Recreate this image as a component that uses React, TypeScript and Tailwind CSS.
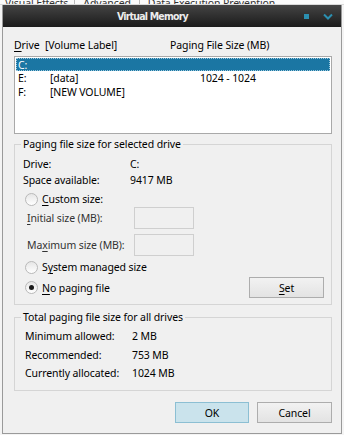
import React from "react";

const U = ({ children }: { children: React.ReactNode }) => (
  <span className="underline underline-offset-[2px]">{children}</span>
);

const Radio = ({ checked }: { checked?: boolean }) => (
  <span className="mr-[4px] flex h-[13px] w-[13px] items-center justify-center rounded-full border border-[#b9b9b9] bg-linear-to-b from-[#e6e6e6] to-[#ffffff]">
    {checked && <span className="h-[5px] w-[5px] rounded-full bg-[#1a1a1a]" />}
  </span>
);

const drives = [
  { letter: "C:", label: "", size: "" },
  { letter: "E:", label: "[data]", size: "1024 - 1024" },
  { letter: "F:", label: "[NEW VOLUME]", size: "" },
];

export default function App() {
  return (
    <div className="h-[435px] w-[344px] overflow-hidden bg-[#f4f4f4] font-['Noto_Sans',sans-serif] text-[10.5px] leading-[14px] tracking-[-0.1px] text-black">
      {/* tab strip, cut off above */}
      <div className="flex h-[5px] items-end overflow-hidden border-b border-[#d9d9d9] bg-[#fbfbfb] pl-[5px] text-[#333]">
        <span className="-mb-[6px] pr-[6px]">Visual Effects</span>
        <span className="-mb-[6px] border-l border-[#bbb] px-[8px]">Advanced</span>
        <span className="-mb-[6px] border-l border-[#bbb] px-[8px]">Data Execution Prevention</span>
      </div>

      <div className="ml-[2px] h-[429px] w-[340px] border-x border-b border-[#9a9a9a] bg-[#f0f0f0]">
        {/* title bar */}
        <div className="flex h-[22px] items-center bg-linear-to-b from-[#444444] to-[#1c1c1c] pr-[8px]">
          <span className="ml-[114px] font-['DejaVu_Sans_Condensed','DejaVu_Sans',sans-serif] text-[10.5px] font-bold tracking-[-0.8px] text-[#ececec]">
            Virtual Memory
          </span>
          <span className="ml-auto h-[5px] w-[5px] bg-[#2b8fb0]" />
          <svg width="10" height="7" viewBox="0 0 10 7" className="ml-[14px]">
            <path d="M1 1.5 L5 5.5 L9 1.5" fill="none" stroke="#2b8fb0" strokeWidth="2" />
          </svg>
        </div>

        <div className="pl-[11px] pr-[9px]">
          {/* list header */}
          <div className="mt-[11px] flex h-[14px] items-center">
            <span className="w-[31px]"><U>D</U>rive</span>
            <span className="w-[125px]">[Volume Label]</span>
            <span>Paging File Size (MB)</span>
          </div>

          {/* list */}
          <div className="mt-[4px] h-[78px] border border-[#a9a9a9] bg-white p-[1px]">
            {drives.map((d, i) => (
              <div
                key={d.letter}
                className={
                  i === 0
                    ? "flex h-[13px] items-center border border-dotted border-[#9cc9de] bg-[#1b76a3] pl-[1px] text-white"
                    : "flex h-[14px] items-center pl-[2px]"
                }
              >
                <span className="w-[32px]">{d.letter}</span>
                <span className="w-[150px]">{d.label}</span>
                <span>{d.size}</span>
              </div>
            ))}
          </div>

          {/* selected drive group */}
          <fieldset className="mt-[3px] h-[168px] border border-[#d5d5d5]">
            <legend className="ml-[6px] px-[2px] leading-[14px]">Paging file size for selected drive</legend>
            <div className="pl-[8px] pr-[7px]">
              <div className="mt-[5px] flex h-[16px] items-center">
                <span className="w-[107px]">Drive:</span>
                <span>C:</span>
              </div>
              <div className="flex h-[16px] items-center">
                <span className="w-[107px]">Space available:</span>
                <span>9417 MB</span>
              </div>
              <div className="mt-[4px] flex h-[14px] items-center pl-[2px]">
                <Radio />
                <span><U>C</U>ustom size:</span>
              </div>
              <div className="mt-[1px] flex h-[22px] items-center pl-[4px]">
                <span className="w-[107px] text-[#333]"><U>I</U>nitial size (MB):</span>
                <span className="h-[22px] w-[60px] border border-[#cfcfcf] bg-[#f0f0f0]" />
              </div>
              <div className="mt-[5px] flex h-[22px] items-center pl-[4px]">
                <span className="w-[107px] text-[#333]">Ma<U>x</U>imum size (MB):</span>
                <span className="h-[22px] w-[60px] border border-[#cfcfcf] bg-[#f0f0f0]" />
              </div>
              <div className="mt-[3px] flex h-[16px] items-center pl-[2px]">
                <Radio />
                <span>S<U>y</U>stem managed size</span>
              </div>
              <div className="mt-[2px] flex h-[21px] items-center pl-[2px]">
                <Radio checked />
                <span><U>N</U>o paging file</span>
                <button className="ml-auto h-[21px] w-[75px] border border-[#adadad] bg-linear-to-b from-[#f2f2f2] to-[#e3e3e3]">
                  <U>S</U>et
                </button>
              </div>
            </div>
          </fieldset>

          {/* all drives group */}
          <fieldset className="mt-[5px] h-[81px] border border-[#d5d5d5]">
            <legend className="ml-[6px] px-[2px] leading-[14px]">Total paging file size for all drives</legend>
            <div className="pl-[10px]">
              <div className="mt-[3px] flex h-[18px] items-center">
                <span className="w-[107px]">Minimum allowed:</span>
                <span>2 MB</span>
              </div>
              <div className="flex h-[19px] items-center">
                <span className="w-[107px]">Recommended:</span>
                <span>753 MB</span>
              </div>
              <div className="flex h-[18px] items-center">
                <span className="w-[107px]">Currently allocated:</span>
                <span>1024 MB</span>
              </div>
            </div>
          </fieldset>

          {/* buttons */}
          <div className="mt-[11px] flex justify-end gap-[8px]">
            <button className="h-[21px] w-[74px] border border-[#8cbfd3] bg-[#cae3ec]">OK</button>
            <button className="h-[21px] w-[75px] border border-[#adadad] bg-linear-to-b from-[#f2f2f2] to-[#e3e3e3]">
              Cancel
            </button>
          </div>
        </div>
      </div>
    </div>
  );
}
